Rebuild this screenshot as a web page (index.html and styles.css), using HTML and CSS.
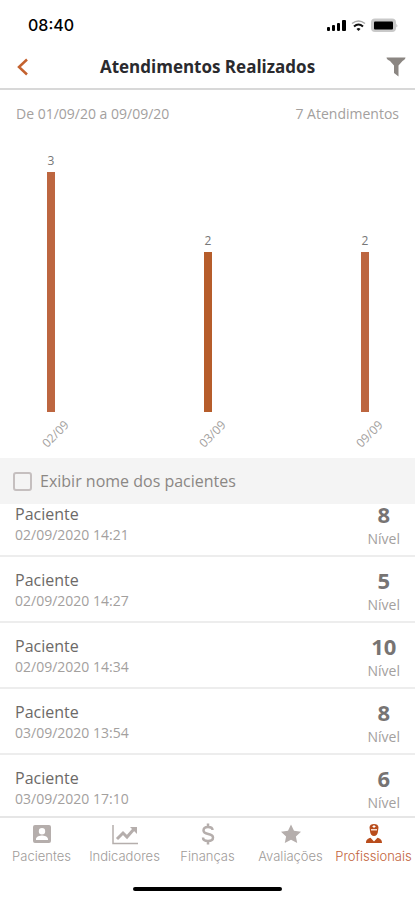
FILE: index.html
```html
<!DOCTYPE html>
<html lang="pt-BR">
<head>
<meta charset="utf-8">
<meta name="viewport" content="width=device-width, initial-scale=1">
<title>Atendimentos Realizados</title>
<link rel="stylesheet" href="styles.css">
</head>
<body>
<div class="status">
  <span class="clock">08:40</span>
  <svg class="status-icons" width="72" height="14" viewBox="0 0 72 14" aria-hidden="true">
    <g fill="#000"><rect x="1" y="9" width="3" height="4" rx="1"/><rect x="6" y="7" width="3" height="6" rx="1"/><rect x="11" y="5" width="3" height="8" rx="1"/><rect x="16" y="2" width="4" height="11" rx="1"/></g>
    <g fill="none"><path d="M26 5.500Q32.500 .5 39 5.500" stroke="#aaa" stroke-width="1.500"/><path d="M28 8.500Q32.500 4.500 37 8.500" stroke="#111" stroke-width="2"/></g>
    <path d="M30.500 11Q32.500 9 34.500 11L32.500 13Z" fill="#111"/>
    <rect x="46" y="1.500" width="23" height="11.500" rx="3" fill="#c9c9c9" stroke="#c9c9c9" stroke-width="2"/>
    <rect x="48" y="3.500" width="19" height="8" rx="1" fill="#000"/><path d="M70.500 5.500Q72 7.500 70.500 9.500Z" fill="#aaa"/>
  </svg>
</div>
<header class="header">
  <button class="icon-button" type="button" aria-label="Voltar">
    <svg width="12" height="18" viewBox="0 0 12 18"><path d="M10 1.500 2 9l8 7.500" fill="none" stroke="#c4622f" stroke-width="2.500"/></svg>
  </button>
  <h1 class="title">Atendimentos Realizados</h1>
  <button class="icon-button" type="button" aria-label="Filtrar">
    <svg width="20" height="20" viewBox="0 0 20 20"><path d="M.5.500h19c0 1.500-1.500 2.500-3 3.500L12.500 8.500v11L8 16V8.500L4 4C2 3 .5 2 .5.500Z" fill="#8b8682"/></svg>
  </button>
</header>
<main class="main">
  <div class="summary"><span>De 01/09/20 a 09/09/20</span><span>7 Atendimentos</span></div>
  <div class="chart">
    <div class="day"><span class="count">3</span><div class="bar" style="--value: 3"></div><span class="date">02/09</span></div>
    <div class="day"><span class="count">2</span><div class="bar bar-deep" style="--value: 2"></div><span class="date">03/09</span></div>
    <div class="day"><span class="count">2</span><div class="bar" style="--value: 2"></div><span class="date">09/09</span></div>
  </div>
  <label class="toggle"><input class="check" type="checkbox"><span>Exibir nome dos pacientes</span></label>
  <ul class="list">
    <li class="row"><div><div class="name">Paciente</div><div class="time">02/09/2020 14:21</div></div><div class="level"><div class="score">8</div><div class="unit">Nível</div></div></li>
    <li class="row"><div><div class="name">Paciente</div><div class="time">02/09/2020 14:27</div></div><div class="level"><div class="score">5</div><div class="unit">Nível</div></div></li>
    <li class="row"><div><div class="name">Paciente</div><div class="time">02/09/2020 14:34</div></div><div class="level"><div class="score">10</div><div class="unit">Nível</div></div></li>
    <li class="row"><div><div class="name">Paciente</div><div class="time">03/09/2020 13:54</div></div><div class="level"><div class="score">8</div><div class="unit">Nível</div></div></li>
    <li class="row"><div><div class="name">Paciente</div><div class="time">03/09/2020 17:10</div></div><div class="level"><div class="score">6</div><div class="unit">Nível</div></div></li>
  </ul>
</main>
<nav class="tabs">
  <a class="tab" href="#pacientes">
    <svg width="26" height="22" viewBox="0 0 26 22"><path fill="#b5aeac" fill-rule="evenodd" d="M6 2h14a2 2 0 0 1 2 2v14a2 2 0 0 1-2 2H6a2 2 0 0 1-2-2V4a2 2 0 0 1 2-2ZM13 5a3.200 3.200 0 1 0 0 6.400A3.200 3.200 0 0 0 13 5ZM7 17h12v-1c0-2.500-4-3.500-6-3.500S7 13.500 7 16Z"/></svg>
    <span>Pacientes</span>
  </a>
  <a class="tab" href="#indicadores">
    <svg width="26" height="22" viewBox="0 0 26 22"><path d="M1 2v18.500h25" fill="none" stroke="#b5aeac" stroke-width="1.500"/><path d="m5 16 6-6 4 4 7-8" fill="none" stroke="#b5aeac" stroke-width="3"/><path d="M18 4h7v7Z" fill="#b5aeac"/></svg>
    <span>Indicadores</span>
  </a>
  <a class="tab" href="#financas">
    <svg width="26" height="22" viewBox="0 0 26 22"><path d="M17.500 7c0-2-1.700-3-4.500-3S8.500 5.200 8.500 7.500c0 5 9.500 2 9.500 7 0 2.300-2 3.500-5 3.500s-5-1.200-5-3.500M13 .500V4m0 14v3.500" fill="none" stroke="#b5aeac" stroke-width="2.500"/></svg>
    <span>Finanças</span>
  </a>
  <a class="tab" href="#avaliacoes">
    <svg width="26" height="22" viewBox="0 0 26 22"><path d="m13 1.500 3 6.300 7 .9-5.100 4.800L19.200 20 13 16.800 6.800 20l1.300-6.500L3 8.700l7-.9Z" fill="#b5aeac"/></svg>
    <span>Avaliações</span>
  </a>
  <a class="tab tab-active" href="#profissionais" aria-current="page">
    <svg width="26" height="22" viewBox="0 0 26 22"><path d="M8.500 4.500C8.500 2 10.500 1 13 1s4.500 1 4.500 3.500L17 8c0 3-2 5-4 5s-4-2-4-5Z" fill="#b94d1c"/><path d="M10 6h6v1.500h-6Z" fill="#f7ddd0"/><path d="M12.500 2h1v1h1v1h-1v1h-1V4h-1V3h1Z" fill="#fff"/><path d="M5 20c0-3.500 2-4.500 4.500-5.300L13 18.500l3.500-3.800C19 15.500 21 16.500 21 20Z" fill="#b94d1c"/></svg>
    <span>Profissionais</span>
  </a>
</nav>
<div class="home"></div>
</body>
</html>
```
FILE: styles.css
```css
* { box-sizing: border-box; }
body {
  margin: 0;
  min-height: 100vh;
  display: flex;
  flex-direction: column;
  background: #fff;
  color: #8b8784;
  font-family: "Open Sans", sans-serif;
  font-size: 14px;
  line-height: 20px;
}
.status {
  display: flex;
  align-items: center;
  justify-content: space-between;
  height: 50px;
  padding: 0 17px 0 28px;
}
.clock { color: #000; font: 500 16px/20px Inter, sans-serif; }
.header {
  display: flex;
  align-items: center;
  justify-content: space-between;
  height: 40px;
  padding: 0 9px 4px 17px;
  border-bottom: 2px solid #d8d8d8;
}
.icon-button { display: flex; padding: 0; border: 0; background: none; }
.title { margin: 0; color: #2a2a2e; font-size: 17px; font-weight: 700; line-height: 24px; }
.main { flex: 1; display: flex; flex-direction: column; }
.summary {
  display: flex;
  justify-content: space-between;
  padding: 14px 16px;
  color: #a3a09e;
}
.chart {
  display: flex;
  justify-content: space-between;
  align-items: flex-end;
  height: 320px;
  padding: 0 20px 12px 21px;
}
.day { display: flex; flex-direction: column; align-items: center; width: 60px; }
.count { font-size: 12px; line-height: 16px; margin-bottom: 3px; color: #777; }
.bar { width: 8px; height: calc(var(--value) * 80px); background: #bd6640; }
.bar-deep { background: #b65d2b; }
.date {
  margin: 11px 0 0 10px;
  padding-bottom: 1px;
  font-size: 12px;
  line-height: 22px;
  color: #a3a09e;
  transform: rotate(-45deg);
}
.toggle {
  display: flex;
  align-items: center;
  gap: 8px;
  height: 46px;
  padding: 0 13px;
  background: #f4f4f4;
  font-size: 16px;
}
.check {
  appearance: none;
  width: 19px;
  height: 19px;
  margin: 0;
  border: 2px solid #c5bfbf;
  border-radius: 3px;
}
.check:checked { background: #b94d1c; }
.list { margin: 0; padding: 0; list-style: none; }
.row {
  display: flex;
  justify-content: space-between;
  height: 66px;
  padding: 13px 15px 0;
  border-bottom: 2px solid #ededed;
}
.row:first-child { height: 53px; padding-top: 0; }
.row:last-child { border-bottom: 0; height: 61px; }
.name { color: #6c6967; font-size: 16px; line-height: 21px; }
.time { color: #a3a09e; }
.level { text-align: center; }
.score { color: #777473; font-size: 22px; font-weight: 700; line-height: 20px; }
.unit { margin-top: 5px; color: #a3a09e; }
.tabs {
  display: grid;
  grid-template-columns: repeat(5, 1fr);
  border-top: 2px solid #e6e6e6;
  padding-top: 5px;
}
.tab {
  display: flex;
  flex-direction: column;
  align-items: center;
  gap: 2px;
  color: #a09b99;
  font: 300 13px/18px Inter, sans-serif;
  text-decoration: none;
}
.tab-active { color: #c2633c; }
.home {
  align-self: center;
  width: 36%;
  height: 4px;
  margin: 22px 0 9px;
  border-radius: 2px;
  background: #000;
}
```
